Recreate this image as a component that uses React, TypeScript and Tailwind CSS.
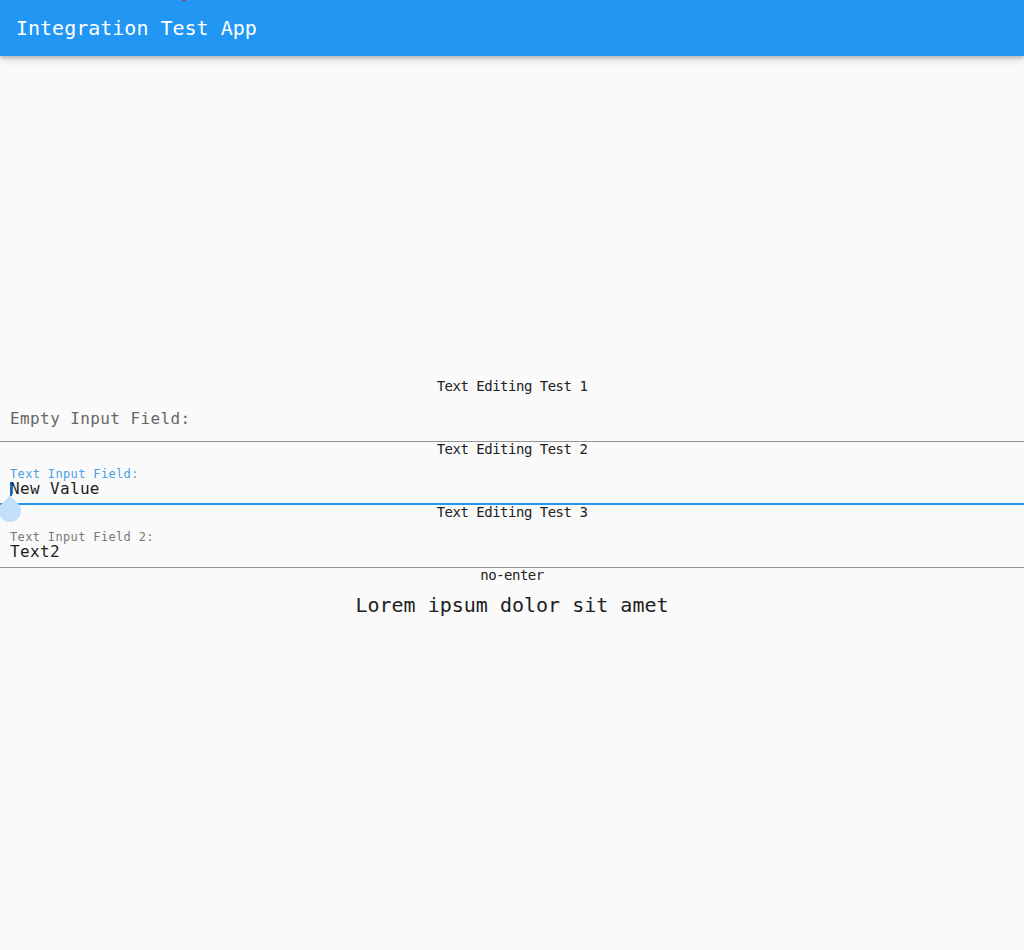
export default function App() {
  return (
    <div className="relative min-h-[950px] bg-[#fafafa] font-['DejaVu_Sans_Mono',monospace]">
      <div className="absolute left-[183px] top-0 z-20 h-[1px] w-[2px] bg-[#ff0000]" />
      <header className="relative z-10 flex h-14 items-center bg-[#2196f3] px-4 shadow-[0_2px_4px_rgba(0,0,0,0.22),0_4px_8px_rgba(0,0,0,0.10)]">
        <span className="text-[20px] leading-7 text-white">Integration Test App</span>
      </header>
      <main className="pt-[323px]">
        <div className="h-4 text-center text-[14px] leading-[14px] tracking-[-0.5px] text-[#212121]">Text Editing Test 1</div>
        <div className="h-[47px] border-b border-[#949494] pl-[10px] pt-[16px]">
          <div className="text-[16px] leading-4 tracking-[0.4px] text-[#666666]">Empty Input Field:</div>
        </div>

        <div className="h-4 text-center text-[14px] leading-[14px] tracking-[-0.5px] text-[#212121]">Text Editing Test 2</div>
        <div className="relative h-[47px] border-b-2 border-[#2196f3] pl-[10px] pt-[8px]">
          <div className="h-[15px] text-[12px] leading-4 tracking-[0.35px] text-[#4a9ee8]">Text Input Field:</div>
          <div className="text-[16px] leading-4 tracking-[0.35px] text-[#1f1f1f]">New Value</div>
          <div className="absolute left-[10px] top-[24px] h-[14px] w-[2px] bg-[#1565c0]" />
        </div>

        <div className="h-4 text-center text-[14px] leading-[14px] tracking-[-0.5px] text-[#212121]">Text Editing Test 3</div>
        <div className="h-[47px] border-b border-[#949494] pl-[10px] pt-[8px]">
          <div className="h-[15px] text-[12px] leading-4 tracking-[0.35px] text-[#777777]">Text Input Field 2:</div>
          <div className="text-[16px] leading-4 tracking-[0.35px] text-[#1f1f1f]">Text2</div>
        </div>

        <div className="h-4 text-center text-[14px] leading-[14px] tracking-[-0.5px] text-[#212121]">no-enter</div>
        <div className="mt-[7px] text-center text-[20px] leading-7 text-[#212121]">Lorem ipsum dolor sit amet</div>
      </main>
      <div className="absolute left-[-1px] top-[500px] h-[22px] w-[22px] rotate-45 rounded-full rounded-tl-none bg-[#c3e0fa]" />
    </div>
  );
}
